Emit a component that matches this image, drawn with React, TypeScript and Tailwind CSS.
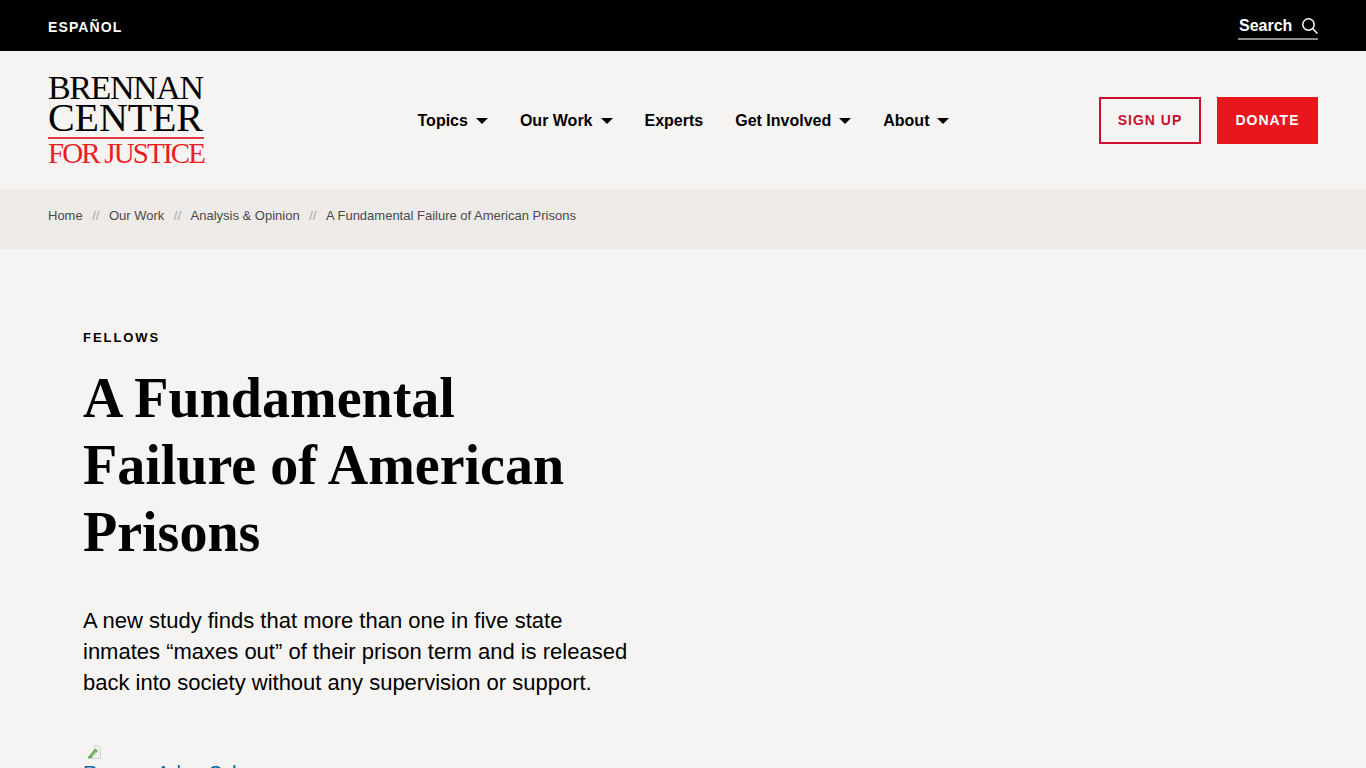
import React from "react";

const sans = "font-['Liberation_Sans',Arial,sans-serif]";

function Caret() {
  return <span className="ml-2 inline-block h-0 w-0 border-x-[6px] border-t-[6px] border-x-transparent border-t-black" />;
}

function NavItem({ label, caret }: { label: string; caret?: boolean }) {
  return (
    <a className="flex items-center text-[16px] font-bold leading-[20px] text-black">
      {label}
      {caret && <Caret />}
    </a>
  );
}

function Sep() {
  return <span className="mx-[9.5px] text-[#aaa7a4]">//</span>;
}

function Logo() {
  return (
    <div className="flex w-[157px] flex-col font-['Liberation_Serif','Times_New_Roman',serif]">
      <div className="h-[26px] whitespace-nowrap text-[34px] leading-[26px] tracking-[-1.4px] text-black">BRENNAN</div>
      <div className="mt-[1px] h-[32px] whitespace-nowrap text-[40px] leading-[32px] tracking-[-0.1px] text-black">CENTER</div>
      <div className="mt-[3px] h-[2px] w-[156px] bg-[#dc3a45]" />
      <div className="mt-[2px] h-[24px] whitespace-nowrap text-[29px] leading-[24px] tracking-[-1.85px] text-[#ed1c24]">FOR JUSTICE</div>
    </div>
  );
}

function BrokenImage() {
  return (
    <svg width="16" height="16" viewBox="0 0 16 16" className="ml-[3px] block">
      <path d="M9 1.5h2.5l3 3v10h-9z" fill="#f2f2f2" stroke="#cfcfcf" />
      <path d="M1.5 13.5 L9.5 4.5 L12 7 L5 14.5 L2.5 14.5z" fill="#6aa84f" />
      <path d="M5.5 12 L10 7 L11 8 L6.5 13z" fill="#b6d7a8" />
    </svg>
  );
}

export default function App() {
  return (
    <div className={`h-screen overflow-hidden bg-[#f6f4f2] ${sans}`}>
      <div className="flex h-[51px] items-center justify-between bg-black pl-[48px] pr-[48px]">
        <a className="pt-[4px] text-[14px] font-bold tracking-[1.1px] text-white">ESPAÑOL</a>
        <div className="flex h-[28px] w-[80px] items-start justify-between border-b-2 border-[#8c8c8c] pl-[1px] pt-[4px]">
          <span className="text-[16px] font-bold leading-[20px] text-white">Search</span>
          <svg width="18" height="18" viewBox="0 0 18 18" fill="none" stroke="white" strokeWidth="1.5" className="-mr-[1px] mt-[1px]">
            <circle cx="7.5" cy="7.5" r="5.7" />
            <path d="M11.7 11.7 L16.5 16.5" />
          </svg>
        </div>
      </div>

      <header className="flex h-[138px] items-center justify-between px-[48px]">
        <Logo />
        <nav className="ml-[63px] flex items-center gap-[32px] pt-[2px]">
          <NavItem label="Topics" caret />
          <NavItem label="Our Work" caret />
          <NavItem label="Experts" />
          <NavItem label="Get Involved" caret />
          <NavItem label="About" caret />
        </nav>
        <div className="flex items-center gap-[16px]">
          <a className="flex h-[47px] w-[102px] items-center justify-center border-2 border-[#c8102e] text-[14px] font-bold tracking-[1px] text-[#c8102e]">SIGN UP</a>
          <a className="flex h-[47px] w-[101px] items-center justify-center bg-[#e9161e] text-[14px] font-bold tracking-[1px] text-white">DONATE</a>
        </div>
      </header>

      <div className="flex h-[60px] items-center bg-[#edeae7] px-[48px] pb-[7px] text-[13px] text-[#4a4a4a]">
        <a>Home</a>
        <Sep />
        <a>Our Work</a>
        <Sep />
        <a>Analysis &amp; Opinion</a>
        <Sep />
        <span>A Fundamental Failure of American Prisons</span>
      </div>

      <main className="pl-[83px] pt-[81px]">
        <div className="text-[13px] font-bold leading-[16px] tracking-[1.95px] text-black">FELLOWS</div>
        <h1 className="mt-[19px] w-[520px] font-['Liberation_Serif','Times_New_Roman',serif] text-[56px] font-bold leading-[67px] text-black">
          A Fundamental Failure of American Prisons
        </h1>
        <p className="mt-[39px] w-[560px] text-[22px] leading-[31px] text-black">
          A new study finds that more than one in five state inmates “maxes out” of their prison term and is released back into society without any supervision or support.
        </p>
        <div className="mt-[46px]">
          <BrokenImage />
          <a className="mt-[3px] block text-[20px] leading-[20px] text-[#06679f]">Reuven Arlen Schumer</a>
        </div>
      </main>
    </div>
  );
}
